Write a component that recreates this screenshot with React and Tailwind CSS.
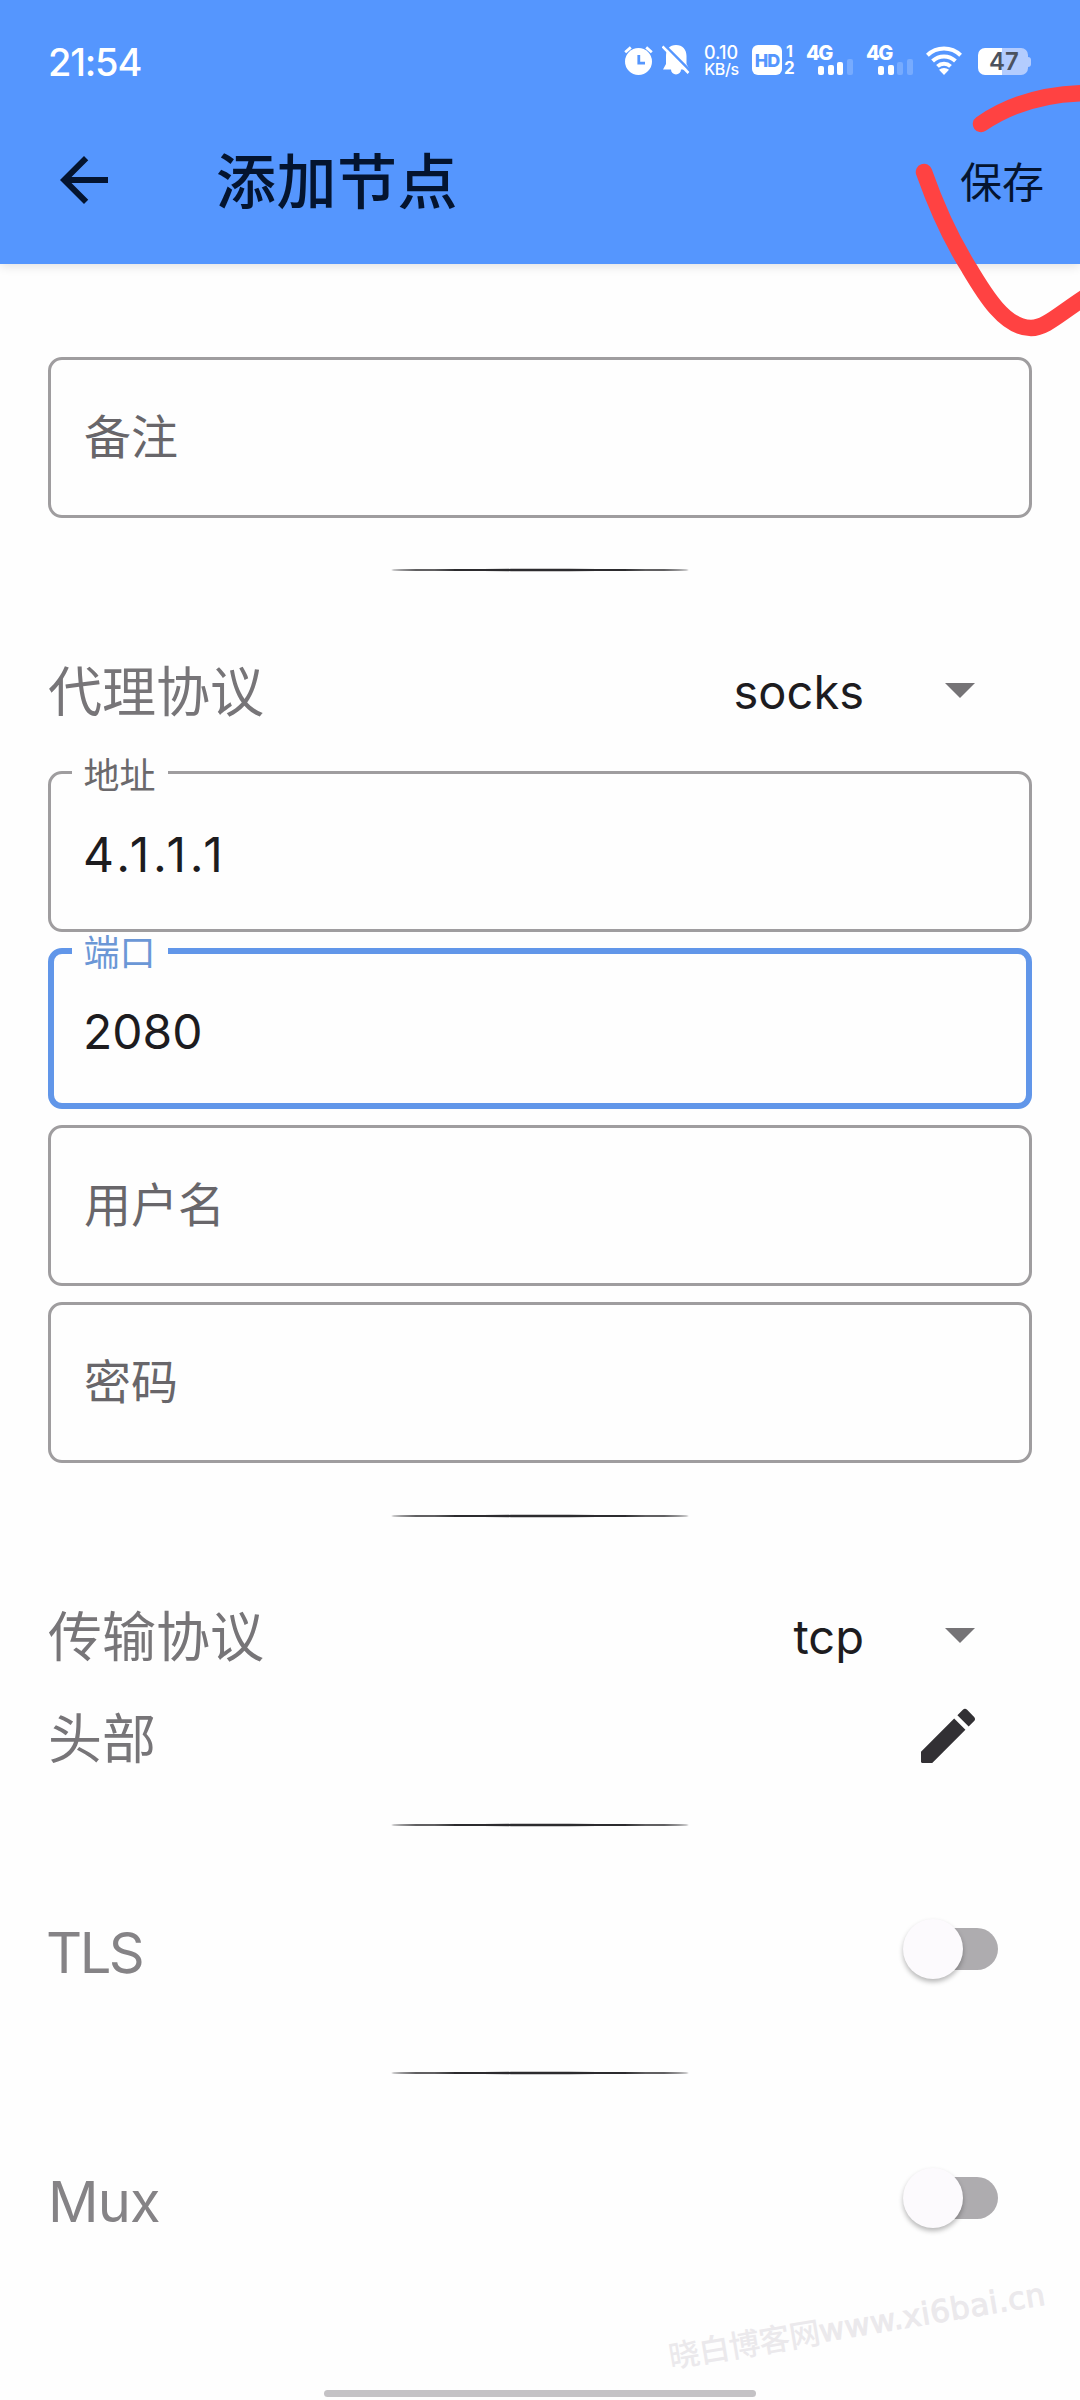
import clsx from "clsx";

function SignalBars({ active }) {
    const bars = [
        { x: 0, y: 7, h: 9 },
        { x: 10, y: 6, h: 10 },
        { x: 19, y: 3, h: 13 },
        { x: 29, y: 0, h: 16 },
    ];

    return (
        <div className="relative h-[30px] w-[48px] shrink-0">
            <span className="absolute top-[-1px] left-0 text-[20px] leading-[19px] font-extrabold tracking-[-1.5px]">4G</span>
            <svg className="absolute top-[14px] left-3" width="36" height="16" viewBox="0 0 36 16">
                {bars.map((bar, i) => (
                    <rect
                        key={bar.x}
                        x={bar.x}
                        y={bar.y}
                        width="6"
                        height={bar.h}
                        rx="2"
                        fill="white"
                        fillOpacity={i < active ? 1 : 0.2}
                    />
                ))}
            </svg>
        </div>
    );
}

function StatusBar() {
    return (
        <div className="flex h-24 items-start pt-[45px] pl-12 text-white">
            <span className="mt-[1px] w-[576px] text-[38px] leading-8 font-medium tracking-[-1.2px]">21:54</span>

            {/* Alarm */}
            <svg className="mt-[1px] shrink-0" width="29" height="30" viewBox="0 0 29 30">
                <circle cx="14.5" cy="15.5" r="13.5" fill="white" />
                <path d="M1.2 6.2 6.8 1.4M27.8 6.2 22.2 1.4" stroke="white" strokeWidth="2.8" />
                <path d="M14.8 9v8.2h6.2" fill="none" stroke="#5596fe" strokeWidth="2.8" />
            </svg>

            {/* Muted bell */}
            <svg className="ml-[9px] shrink-0" width="29" height="31" viewBox="0 0 29 31">
                <path
                    d="M14 0c6.5 0 10.5 4.500 10.500 11v8l3 5.500H19a5 5 0 0 1-10 0H1L4 19v-8C4 4.500 7.500 0 14 0z"
                    fill="white"
                />
                <path d="M2.500 0 29 26.500" stroke="#5596fe" strokeWidth="2.500" />
                <path d="M.5 1.500 26.500 28" stroke="white" strokeWidth="2.500" />
            </svg>

            <div className="ml-3 w-[37px] shrink-0 text-center text-[18px] leading-[17px] font-medium whitespace-nowrap">
                <div className="-mt-[1px] -ml-[1px]">0.10</div>
                <div className="text-[16px] tracking-[-0.4px]">KB/s</div>
            </div>

            <div className="ml-3 flex size-[30px] shrink-0 items-center justify-center rounded-md bg-white text-[18px] font-extrabold tracking-[-1px] text-[#5596fe]">
                HD
            </div>
            <div className="ml-[2px] w-[22px] shrink-0 leading-[17px] font-bold">
                <div className="-mt-[2px] pl-[2px] text-[16px]">1</div>
                <div className="text-[17px]">2</div>
            </div>

            <SignalBars active={3} />
            <div className="w-3" />
            <SignalBars active={2} />

            {/* Wifi */}
            <svg className="mt-[1px] ml-[12px] shrink-0" width="36" height="29" viewBox="0 0 36 29">
                <g fill="none" stroke="white" strokeWidth="4">
                    <path d="M1.400 9.200a24 24 0 0 1 33.200 0" />
                    <path d="M6.600 15a16.500 16.500 0 0 1 22.800 0" />
                    <path d="M11.500 20.400a9.500 9.500 0 0 1 13 0" />
                </g>
                <path d="M13 23.800a7.500 7.500 0 0 1 10 0L18 29z" fill="white" />
            </svg>

            <div className="mt-[3px] ml-4 flex shrink-0 items-center">
                <div className="flex h-[27px] w-[50px] items-center justify-center rounded-[7px] bg-linear-to-r from-white from-48% to-[#b3ccfe] to-48% pl-[2px] text-[24px] leading-none font-semibold text-[#4b525f]">
                    47
                </div>
                <div className="h-[10px] w-[3px] rounded-r-full bg-[#b3ccfe]" />
            </div>
        </div>
    );
}

function Toolbar() {
    return (
        <div className="flex h-[168px] items-center pr-[36px] pl-12 text-[#04142f]">
            <svg className="size-[72px]" viewBox="0 0 24 24" fill="#04142f">
                <path d="M20 11H7.830l5.590-5.590L12 4l-8 8 8 8 1.410-1.410L7.830 13H20z" />
            </svg>
            <h1 className="ml-24 flex-1 pt-1 text-[60px] leading-none font-medium tracking-[0.5px]">添加节点</h1>
            <button className="pt-[5px] text-[42px] leading-none">保存</button>
        </div>
    );
}

function Field({ label, value, focused }) {
    return (
        <div
            className={clsx(
                "relative flex h-[161px] items-center rounded-[14px]",
                focused ? "border-[6px] border-[#6196e9] pl-[30px]" : "border-[3px] border-[#9f9d9f] pl-[33px]"
            )}
        >
            {value ? (
                <>
                    <span
                        className={clsx(
                            "absolute flex h-9 w-24 items-center justify-center bg-[#fefefe] pt-[2px] pr-[1px] text-[36px] leading-none",
                            focused ? "-top-[20px] left-[18px] text-[#6b97d6]" : "-top-[17px] left-[21px] text-[#6b696c]"
                        )}
                    >
                        {label}
                    </span>
                    <span
                        className={clsx(
                            "-ml-[1px] pt-[6px] text-[48px] leading-none text-[#1d1c1f]",
                            value.includes(".") && "tracking-[3.8px]"
                        )}
                    >
                        {value}
                    </span>
                </>
            ) : (
                <span className="pb-[2px] text-[47px] leading-none text-[#68666a]">{label}</span>
            )}
        </div>
    );
}

function Divider({ className }) {
    return (
        <svg className={clsx("mx-auto block shrink-0", className)} width="298" height="4" viewBox="0 0 298 4">
            <ellipse cx="149" cy="2" rx="149" ry="1.150" fill="#2c2b2e" />
        </svg>
    );
}

function SelectRow({ label, value, className }) {
    return (
        <div className={clsx("flex h-[120px] items-center pr-[57px]", className)}>
            <span className="flex-1 pt-[3px] text-[54px] leading-none text-[#777578]">{label}</span>
            <span className="text-[47px] leading-none text-[#1d1c1f]">{value}</span>
            <svg className="-mt-[1px] ml-[81px]" width="30" height="15" viewBox="0 0 30 15">
                <path d="M0 0h30L15 15z" fill="#757376" />
            </svg>
        </div>
    );
}

function SwitchRow({ label, className }) {
    return (
        <div className={clsx("flex h-[120px] items-center justify-between pr-[34px]", className)}>
            <span
                className={clsx(
                    "pt-[7px] text-[56px] leading-none text-[#858386]",
                    label === "TLS" ? "-ml-[2px] tracking-[-2.5px]" : "tracking-[-0.8px]"
                )}
            >
                {label}
            </span>
            <div className="flex h-[42px] w-[90px] items-center rounded-full bg-[#aeacaf]">
                <div className="-ml-[5px] size-[60px] shrink-0 rounded-full bg-[#fcfafd] shadow-[0_3px_5px_rgba(0,0,0,0.28)]" />
            </div>
        </div>
    );
}

function App() {
    return (
        <div className="relative flex h-[2400px] w-[1080px] flex-col overflow-hidden bg-[#fefefe] font-['Inter','Noto_Sans_CJK_SC',sans-serif]">
            <header className="h-[264px] shrink-0 bg-[#5596fe] shadow-[0_2px_10px_rgba(0,0,0,0.12)]">
                <StatusBar />
                <Toolbar />
            </header>

            <main className="flex flex-col px-12 pt-[93px]">
                <Field label="备注" />
                <Divider className="mt-[50px]" />

                <SelectRow className="mt-[59px]" label="代理协议" value="socks" />
                <div className="mt-5 flex flex-col gap-4">
                    <Field label="地址" value="4.1.1.1" />
                    <Field label="端口" value="2080" focused />
                    <Field label="用户名" />
                    <Field label="密码" />
                </div>
                <Divider className="mt-[51px]" />

                <SelectRow className="mt-[58px]" label="传输协议" value="tcp" />
                <div className="flex h-[84px] items-center justify-between pr-12 text-[54px] leading-none text-[#777578]">
                    <span className="pt-[3px]">头部</span>
                    <svg className="-mt-1 size-[72px]" viewBox="0 0 24 24" fill="#323034">
                        <path d="M3 17.250v3.350c0 .25.15.4.4.4h3.350L17.810 9.940l-3.750-3.750zM20.710 7.040c.39-.39.39-1.020 0-1.410l-2.340-2.340a.996.996 0 0 0-1.410 0l-1.830 1.830 3.750 3.750z" />
                    </svg>
                </div>
                <Divider className="mt-[43px]" />

                <SwitchRow className="mt-[62px]" label="TLS" />
                <Divider className="mt-[62px]" />
                <SwitchRow className="mt-[63px]" label="Mux" />
            </main>

            <div className="mx-auto mt-auto mb-[3px] h-[7px] w-[432px] shrink-0 rounded-full bg-[#c4c2c5]" />

            {/* Watermark */}
            <div className="absolute top-[2310px] left-[664px] flex w-[386px] -rotate-[9.5deg] items-center justify-center leading-none whitespace-nowrap text-[#ebe9ec]">
                <span className="text-[31px] font-medium tracking-[-0.5px]">晓白博客网</span>
                <span className="font-['DejaVu_Sans'] text-[31px] tracking-[0.4px] [-webkit-text-stroke:1px_#ebe9ec]">
                    www.xi6bai.cn
                </span>
            </div>

            {/* Hand-drawn marker round the save button */}
            <svg
                className="pointer-events-none absolute top-20 right-0"
                width="180"
                height="270"
                viewBox="900 80 180 270"
                fill="none"
                stroke="#ff4242"
                strokeWidth="16.5"
                strokeLinecap="round"
            >
                <path d="M981 124C1010 104 1044 93 1090 93" />
                <path d="M924 172C936 206 949 236 969 268C985 295 1005 328 1031 328C1046 328 1060 313 1090 294" />
            </svg>
        </div>
    );
}

export default App;
